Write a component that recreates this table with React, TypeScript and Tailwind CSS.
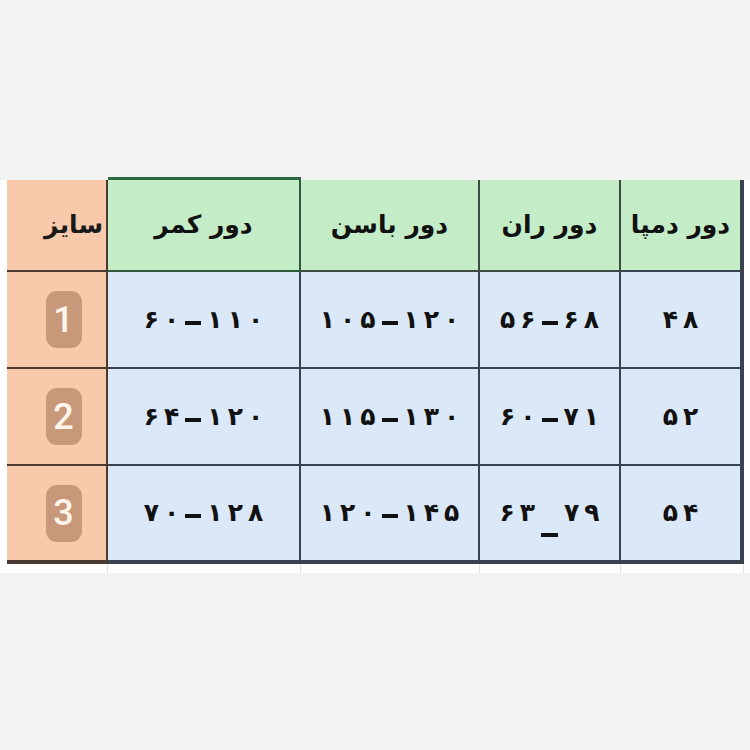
const headers = ["دور کمر", "دور باسن", "دور ران", "دور دمپا"];

// values written in visual order, left to right
const rows = [
  { size: "1", cells: ["۶۰ـ۱۱۰", "۱۰۵ـ۱۲۰", "۵۶ـ۶۸", "۴۸"] },
  { size: "2", cells: ["۶۴ـ۱۲۰", "۱۱۵ـ۱۳۰", "۶۰ـ۷۱", "۵۲"] },
  { size: "3", cells: ["۷۰ـ۱۲۸", "۱۲۰ـ۱۴۵", "۶۳_۷۹", "۵۴"] },
];

const colW = ["w-[193px]", "w-[179px]", "w-[141px]", "w-[123px]"];

function Value({ text }: { text: string }) {
  return (
    <div dir="ltr" className="flex items-baseline gap-[5px] text-[25px] font-bold text-[#111]">
      {Array.from(text).map((ch, i) =>
        ch === "ـ" ? (
          <span key={i} className="mx-[1px] inline-block h-[4px] w-[16px] self-center translate-y-[3px] bg-[#111]" />
        ) : ch === "_" ? (
          <span key={i} className="mx-[1px] inline-block h-[4px] w-[17px] self-end bg-[#111] mb-[-5px]" />
        ) : (
          <span key={i}>{ch}</span>
        )
      )}
    </div>
  );
}

export default function App() {
  const arabic = { fontFamily: '"DejaVu Sans", "Noto Sans", sans-serif' };

  return (
    <div className="h-[750px] w-[750px] bg-[#f3f3f3] pt-[180px]" style={arabic}>
      <div className="bg-white pl-[7px]">
        {/* Header */}
        <div className="flex h-[92px]">
          <div className="flex w-[101px] items-center justify-end border-b-2 border-r-2 border-[#4a3a32] bg-[#f8c9ab] pr-[3px]">
            <span dir="rtl" className="text-[25px] font-bold text-[#1a1a1a]">سایز</span>
          </div>
          {headers.map((h, i) => (
            <div
              key={h}
              className={`flex ${colW[i]} items-center justify-center border-b-2 bg-[#c4ecc7] ${
                i === 0
                  ? "border-r-2 border-[#2f5a3c] shadow-[0_-3px_0_#2f6a40]"
                  : i === 3
                  ? "border-r-4 border-[#3a4450]"
                  : "border-r-2 border-[#3d4a45]"
              }`}
            >
              <span dir="rtl" className="whitespace-nowrap text-[25px] font-bold text-[#111]">
                {h}
              </span>
            </div>
          ))}
        </div>

        {/* Body */}
        {rows.map((r, ri) => (
          <div key={r.size} className={`flex ${ri === 2 ? "h-[98px]" : "h-[97px]"}`}>
            <div
              className={`flex w-[101px] items-center justify-center border-r-2 border-[#4a3a32] bg-[#f8c9ab] ${
                ri === 2 ? "border-b-4" : "border-b-2"
              }`}
            >
              <div className="ml-[14px] flex h-[57px] w-[36px] items-center justify-center rounded-[11px] bg-[#c8987a]">
                <span
                  className="text-[36px] font-medium leading-none text-[#fff4ea]"
                  style={{ fontFamily: "Roboto, sans-serif" }}
                >
                  {r.size}
                </span>
              </div>
            </div>
            {r.cells.map((c, ci) => (
              <div
                key={ci}
                className={`flex ${colW[ci]} items-center justify-center border-[#3a4450] bg-[#dae8f7] ${
                  ri === 2 ? "border-b-4" : "border-b-2"
                } ${ci === 3 ? "border-r-4" : "border-r-2"}`}
              >
                <Value text={c} />
              </div>
            ))}
          </div>
        ))}

        {/* faint grid below */}
        <div className="flex h-[9px]">
          <div className="w-[101px] border-r border-[#e2e2e2]" />
          {colW.map((w, i) => (
            <div key={i} className={`${w} border-r border-[#e2e2e2]`} />
          ))}
        </div>
      </div>
    </div>
  );
}
